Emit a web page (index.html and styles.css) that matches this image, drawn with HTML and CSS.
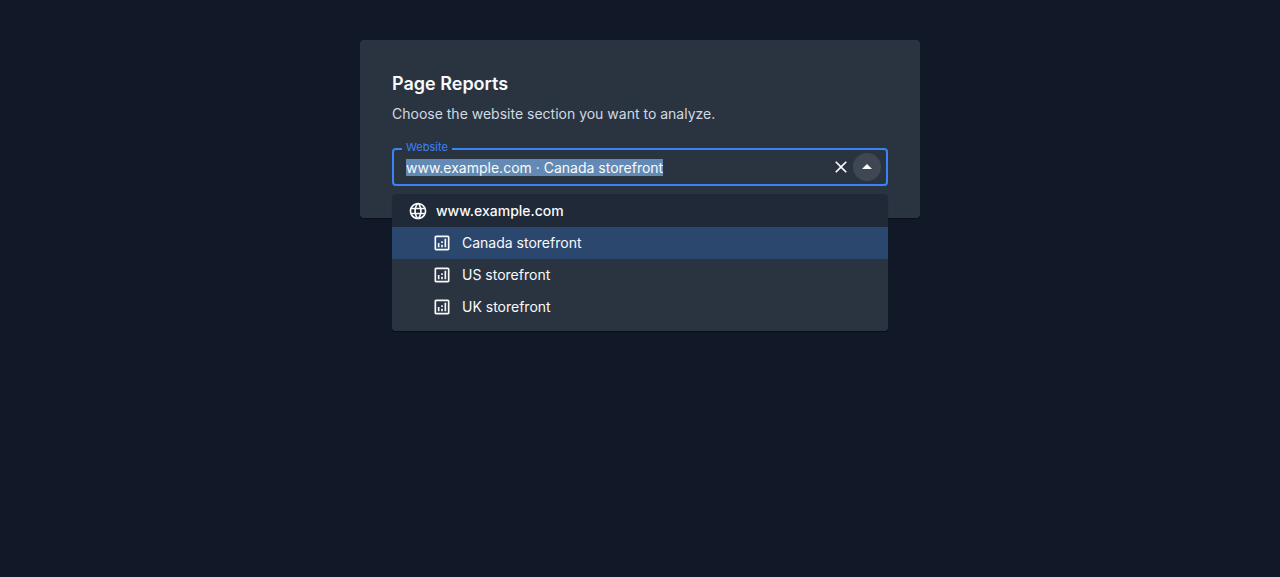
FILE: index.html
```html
<!DOCTYPE html>
<html lang="en">
  <head>
    <meta charset="UTF-8" />
    <meta name="viewport" content="width=device-width, initial-scale=1.0" />
    <title>Page Reports</title>
    <link rel="stylesheet" href="styles.css">
  </head>
  <body>
    <!-- Shared icons -->
    <svg class="sprite" aria-hidden="true">
      <symbol id="icon-globe" viewBox="0 0 24 24">
        <path d="M11.99 2C6.47 2 2 6.48 2 12s4.47 10 9.99 10C17.52 22 22 17.52 22 12S17.52 2 11.99 2zm6.93 6h-2.95c-.32-1.25-.78-2.45-1.38-3.56 1.84.63 3.37 1.91 4.33 3.56zM12 4.04c.83 1.2 1.48 2.53 1.91 3.96h-3.82c.43-1.43 1.08-2.76 1.91-3.96zM4.26 14C4.1 13.36 4 12.69 4 12s.1-1.36.26-2h3.38c-.08.66-.14 1.32-.14 2s.06 1.34.14 2H4.26zm.82 2h2.95c.32 1.25.78 2.45 1.38 3.56-1.84-.63-3.37-1.9-4.33-3.56zm2.95-8H5.08c.96-1.66 2.49-2.93 4.33-3.56C8.81 5.55 8.35 6.75 8.03 8zM12 19.96c-.83-1.2-1.48-2.53-1.91-3.96h3.82c-.43 1.43-1.08 2.76-1.91 3.96zM14.34 14H9.66c-.09-.66-.16-1.32-.16-2s.07-1.35.16-2h4.68c.09.65.16 1.32.16 2s-.07 1.34-.16 2zm.25 5.56c.6-1.11 1.06-2.31 1.38-3.56h2.95c-.96 1.65-2.49 2.93-4.33 3.56zM16.36 14c.08-.66.14-1.32.14-2s-.06-1.34-.14-2h3.38c.16.64.26 1.31.26 2s-.1 1.36-.26 2h-3.38z" />
      </symbol>
      <symbol id="icon-chart" viewBox="0 0 24 24">
        <path d="M19 3H5c-1.1 0-2 .9-2 2v14c0 1.1.9 2 2 2h14c1.1 0 2-.9 2-2V5c0-1.1-.9-2-2-2zm0 16H5V5h14v14z" />
        <path d="M7 12h2v5H7zM15 7h2v10h-2zM11 14h2v3h-2zM11 10h2v2h-2z" />
      </symbol>
      <symbol id="icon-close" viewBox="0 0 24 24">
        <path d="M19 6.41L17.59 5 12 10.59 6.41 5 5 6.41 10.59 12 5 17.59 6.41 19 12 13.41 17.59 19 19 17.59 13.41 12z" />
      </symbol>
      <symbol id="icon-arrow-up" viewBox="0 0 24 24">
        <path d="M7 14l5-5 5 5z" />
      </symbol>
    </svg>

    <main class="card">
      <h1>Page Reports</h1>
      <p>Choose the website section you want to analyze.</p>

      <div class="select">
        <div class="field">
          <label for="website">Website</label>
          <input id="website" type="text" role="combobox" aria-expanded="true" aria-controls="website-list" autocomplete="off" spellcheck="false" value="www.example.com · Canada storefront" autofocus>
          <button type="button" class="icon-btn clear" aria-label="Clear">
            <svg><use href="#icon-close" /></svg>
          </button>
          <button type="button" class="icon-btn toggle" aria-label="Close">
            <svg><use href="#icon-arrow-up" /></svg>
          </button>
        </div>

        <ul class="menu" id="website-list" role="listbox" aria-label="Website">
          <li class="group" role="presentation">
            <svg><use href="#icon-globe" /></svg>
            <span>www.example.com</span>
          </li>
          <li class="option selected" role="option" aria-selected="true">
            <svg><use href="#icon-chart" /></svg>
            <span>Canada storefront</span>
          </li>
          <li class="option" role="option" aria-selected="false">
            <svg><use href="#icon-chart" /></svg>
            <span>US storefront</span>
          </li>
          <li class="option" role="option" aria-selected="false">
            <svg><use href="#icon-chart" /></svg>
            <span>UK storefront</span>
          </li>
        </ul>
      </div>
    </main>

    <script>
      // Select the current value so typing replaces it
      const input = document.getElementById('website');
      input.focus();
      input.select();
    </script>
  </body>
</html>
```
FILE: styles.css
```css
* {
  margin: 0;
  padding: 0;
  box-sizing: border-box;
}

body {
  font-family: Inter, 'Liberation Sans', sans-serif;
  font-size: 14px;
  line-height: 20px;
  min-height: 100vh;
  background: #111827;
  color: #f9fafb;
  padding: 40px 16px;
}

svg {
  display: block;
  flex: none;
  width: 20px;
  height: 20px;
  fill: currentColor;
}

.sprite {
  position: absolute;
  width: 0;
  height: 0;
}

.card {
  max-width: 560px;
  margin: 0 auto;
  padding: 32px;
  background: #2a3441;
  border-radius: 4px;
  box-shadow: 0 1px 1px rgba(0, 0, 0, 0.4);
}

.card h1 {
  font-size: 18px;
  font-weight: 600;
  line-height: 24px;
  margin-bottom: 8px;
}

.card p {
  color: #d1d9e2;
  margin-bottom: 24px;
}

.select {
  position: relative;
}

.field {
  position: relative;
  display: flex;
  align-items: center;
  height: 38px;
  padding: 0 5px 0 12px;
  border: 2px solid #3b82f6;
  border-radius: 4px;
}

.field label {
  position: absolute;
  top: -11px;
  left: 8px;
  padding: 0 4px;
  background: #2a3441;
  color: #3b82f6;
  font-size: 11px;
  line-height: 16px;
}

.field input {
  flex: 1;
  min-width: 0;
  border: 0;
  outline: 0;
  background: transparent;
  color: #f9fafb;
  font: inherit;
  line-height: 17px;
}

.field input::selection {
  background: #628ab5;
  color: #f9fafb;
}

.icon-btn {
  display: flex;
  align-items: center;
  justify-content: center;
  width: 28px;
  height: 28px;
  border: 0;
  border-radius: 50%;
  background: transparent;
  color: #f9fafb;
  cursor: pointer;
}

.clear {
  width: 24px;
}

.toggle {
  background: #3f4752;
}

.toggle svg {
  width: 24px;
  height: 24px;
}

.menu {
  position: absolute;
  top: 100%;
  left: 0;
  right: 0;
  margin-top: 8px;
  padding-bottom: 8px;
  list-style: none;
  background: #2a3441;
  border-radius: 4px;
  overflow: hidden;
  box-shadow: 0 1px 1px rgba(0, 0, 0, 0.4);
}

.group,
.option {
  display: flex;
  align-items: center;
  gap: 8px;
  padding: 6px 16px;
}

.group {
  background: #1f2937;
  font-weight: 500;
  line-height: 21px;
}

.option {
  gap: 10px;
  padding-left: 40px;
  cursor: pointer;
}

.option.selected {
  background: #2c476e;
}
```
